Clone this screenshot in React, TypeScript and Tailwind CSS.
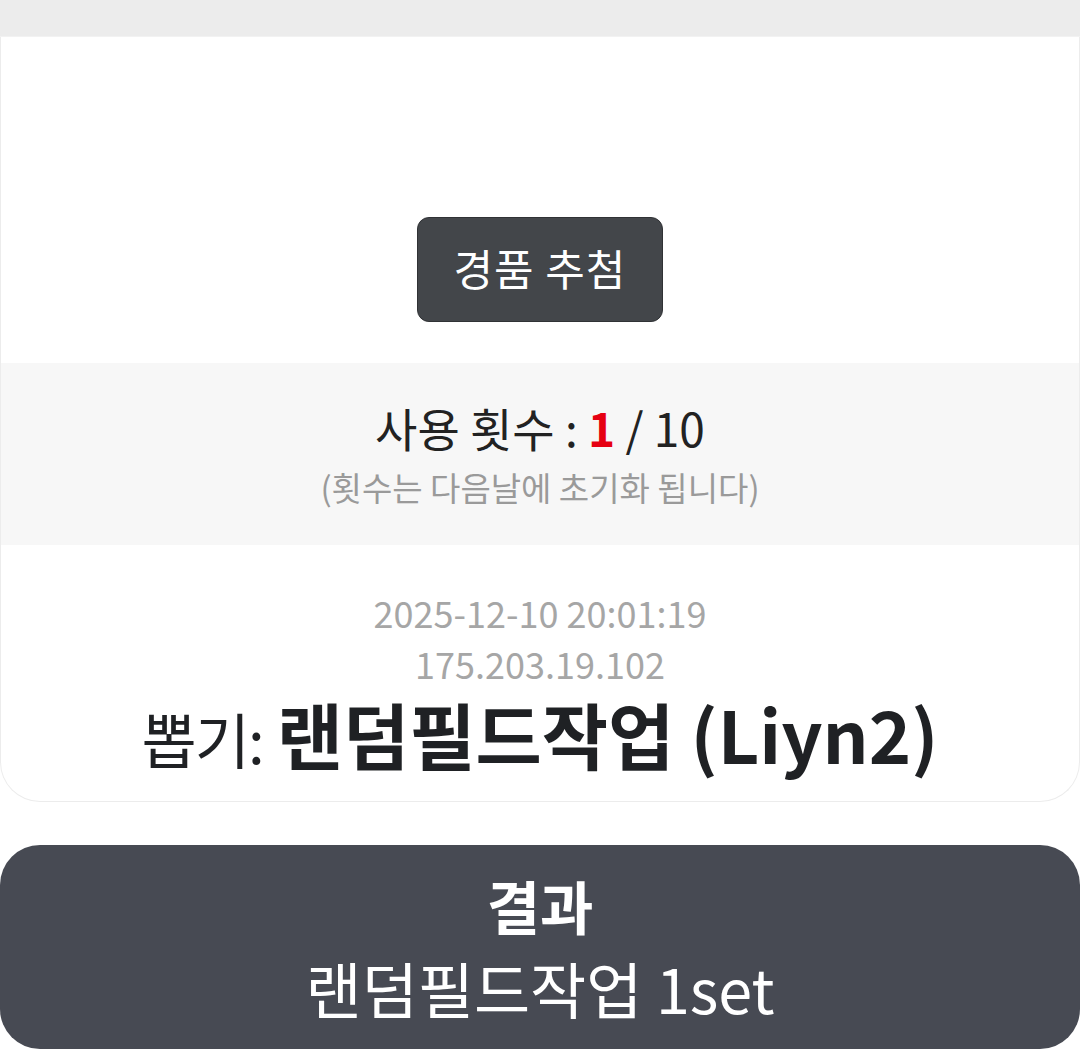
import React from 'react'

const FONT = "font-['Noto_Sans_CJK_KR','Noto_Sans',sans-serif]"

export default function App() {
  return (
    <div className={`w-[1080px] h-[1056px] bg-white overflow-hidden flex flex-col ${FONT}`}>
      {/* 상단 바 */}
      <div className="h-[37px] shrink-0 bg-[#ececec] border-b border-[#f2f2f2]" />

      {/* 추첨 카드 */}
      <div className="bg-white rounded-b-[40px] border-x border-b border-[#ececec] overflow-hidden">
        <div className="h-[326px] flex items-end justify-center pb-[41px]">
          <button className="w-[246px] h-[105px] rounded-[12px] bg-[#43464a] border border-[#303235] text-white text-[43px] leading-none tracking-[1px] pb-[4px]">
            경품 추첨
          </button>
        </div>

        {/* 사용 횟수 */}
        <div className="h-[182px] bg-[#f7f7f7] flex flex-col items-center pt-[35px] gap-[7px]">
          <p className="text-[46px] leading-[58px] text-[#222]">
            사용 횟수 : <span className="font-bold text-[#e60012]">1</span> / 10
          </p>
          <p className="text-[33px] leading-[48px] text-[#9a9a9a]">
            (횟수는 다음날에 초기화 됩니다)
          </p>
        </div>

        {/* 뽑기 기록 */}
        <div className="h-[256px] flex flex-col items-center pt-[43px]">
          <p className="text-[36px] leading-[48px] text-[#a6a6a6]">2025-12-10 20:01:19</p>
          <p className="text-[36px] leading-[48px] text-[#a6a6a6] mt-[3px]">175.203.19.102</p>
          <div className="flex items-baseline gap-[14px] text-[#1f2124] whitespace-nowrap">
            <span className="text-[60px] leading-[72px] tracking-[-2px]">뽑기:</span>
            <span className="text-[72px] leading-[92px] font-bold">랜덤필드작업 (Liyn2)</span>
          </div>
        </div>
      </div>

      {/* 결과 */}
      <div className="mt-[43px] h-[204px] rounded-[40px] bg-[#474a53] flex flex-col items-center pt-[27px] text-white">
        <p className="text-[58px] font-bold leading-[66px]">결과</p>
        <p className="text-[61px] leading-[100px]">랜덤필드작업 1set</p>
      </div>
    </div>
  )
}
